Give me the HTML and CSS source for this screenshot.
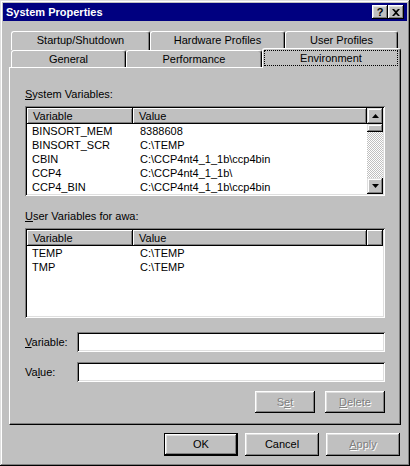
FILE: index.html
```html
<!DOCTYPE html>
<html>

	<head lang="en">
		<meta charset="UTF-8">
		<title>System Properties</title>
		<link rel="stylesheet" href="styles.css">
	</head>

	<body>
		<div class="window">
			<div class="titlebar">
				<span class="title">System Properties</span>
				<div class="tbtns">
					<span class="tbtn help">?</span>
					<span class="tbtn">
						<svg width="8" height="7" viewBox="0 0 8 7"><path d="M0 0h2l2 2 2-2h2L5 3.5 8 7H6L4 5 2 7H0l3-3.5z" fill="#000"/></svg>
					</span>
				</div>
			</div>
			<div class="content">
				<div class="tabs">
					<div class="row">
						<div class="tab" style="width: 139px">Startup/Shutdown</div>
						<div class="tab" style="width: 135px">Hardware Profiles</div>
						<div class="tab" style="width: 113px">User Profiles</div>
					</div>
					<div class="row front">
						<div class="tab" style="width: 115px">General</div>
						<div class="tab" style="width: 136px">Performance</div>
						<div class="tab active" style="width: 139px"><span class="focus">Environment</span></div>
					</div>
				</div>

				<div class="panel">
					<div class="label"><u>S</u>ystem Variables:</div>
					<div class="list">
						<div class="list-main">
							<div class="head">
								<div class="hcell c1">Variable</div>
								<div class="hcell c2">Value</div>
							</div>
							<div class="item"><span class="c1">BINSORT_MEM</span><span class="c2">8388608</span></div>
							<div class="item"><span class="c1">BINSORT_SCR</span><span class="c2">C:\TEMP</span></div>
							<div class="item"><span class="c1">CBIN</span><span class="c2">C:\CCP4nt4_1_1b\ccp4bin</span></div>
							<div class="item"><span class="c1">CCP4</span><span class="c2">C:\CCP4nt4_1_1b\</span></div>
							<div class="item"><span class="c1">CCP4_BIN</span><span class="c2">C:\CCP4nt4_1_1b\ccp4bin</span></div>
						</div>
						<div class="scrollbar">
							<div class="sbtn">
								<svg width="7" height="4" viewBox="0 0 7 4"><path d="M3.5 0 7 4H0z" fill="#000"/></svg>
							</div>
							<div class="thumb"></div>
							<div class="track"></div>
							<div class="sbtn">
								<svg width="7" height="4" viewBox="0 0 7 4"><path d="M0 0h7L3.5 4z" fill="#000"/></svg>
							</div>
						</div>
					</div>

					<div class="label second"><u>U</u>ser Variables for awa:</div>
					<div class="list">
						<div class="list-main">
							<div class="head">
								<div class="hcell c1">Variable</div>
								<div class="hcell c2 wide">Value</div>
								<div class="hcell rest"></div>
							</div>
							<div class="item"><span class="c1">TEMP</span><span class="c2">C:\TEMP</span></div>
							<div class="item"><span class="c1">TMP</span><span class="c2">C:\TEMP</span></div>
						</div>
					</div>

					<div class="field first">
						<label><u>V</u>ariable:</label>
						<div class="input"></div>
					</div>
					<div class="field">
						<label>Va<u>l</u>ue:</label>
						<div class="input"></div>
					</div>
					<div class="actions">
						<span class="btn disabled">S<u>e</u>t</span>
						<span class="btn disabled"><u>D</u>elete</span>
					</div>
				</div>

				<div class="buttons">
					<span class="btn default">OK</span>
					<span class="btn">Cancel</span>
					<span class="btn disabled"><u>A</u>pply</span>
				</div>
			</div>
		</div>
	</body>

</html>
```

FILE: styles.css
```css
* {
	margin: 0;
	padding: 0;
	box-sizing: border-box;
}

body {
	background-color: #c0c0c0;
	font-family: "Liberation Sans", Arial, sans-serif;
	font-size: 11px;
	color: #000;
}

u {
	text-decoration: underline;
	text-underline-offset: 1px;
}

.window {
	width: 410px;
	height: 466px;
	padding: 3px;
	background-color: #c0c0c0;
	box-shadow: inset -1px -1px #000, inset 1px 1px #dfdfdf, inset -2px -2px #808080, inset 2px 2px #fff;
}

.titlebar {
	height: 18px;
	background-color: #000080;
	display: flex;
	align-items: center;
	justify-content: space-between;
	padding: 0 3px 0 3px;
}

.title {
	color: #fff;
	font-weight: bold;
	font-size: 11px;
}

.tbtns {
	display: flex;
}

.tbtn {
	width: 16px;
	height: 14px;
	display: flex;
	align-items: center;
	justify-content: center;
	background-color: #c0c0c0;
	box-shadow: inset -1px -1px #000, inset 1px 1px #fff, inset -2px -2px #808080, inset 2px 2px #dfdfdf;
}

.help {
	font-weight: bold;
	font-size: 11px;
	line-height: 14px;
}

.content {
	padding: 0 6px;
}

.tabs {
	margin-top: 10px;
	padding-left: 2px;
}

.row {
	display: flex;
	height: 19px;
}

.row.front {
	height: 17px;
	align-items: flex-start;
}

.tab {
	height: 100%;
	border: 1px solid #fff;
	border-right-color: #000;
	border-bottom: none;
	border-radius: 3px 3px 0 0;
	box-shadow: inset -1px 0 #808080;
	background-color: #c0c0c0;
	text-align: center;
	line-height: 16px;
}

.tab.active {
	height: 20px;
	margin-top: -2px;
	margin-bottom: -1px;
	position: relative;
	z-index: 1;
	padding: 1px 2px 0 1px;
}

.focus {
	display: block;
	height: 16px;
	line-height: 14px;
	border: 1px dotted #000;
}

.panel {
	height: 358px;
	border: 1px solid #fff;
	border-right-color: #000;
	border-bottom-color: #000;
	box-shadow: inset -1px -1px #808080;
	padding: 20px 15px 0 15px;
}

.label {
	line-height: 13px;
	margin-bottom: 5px;
}

.label.second {
	margin-top: 14px;
}

.list {
	height: 90px;
	background-color: #fff;
	padding: 2px;
	display: flex;
	box-shadow: inset 1px 1px #808080, inset -1px -1px #fff, inset 2px 2px #000, inset -2px -2px #dfdfdf;
	overflow: hidden;
}

.list-main {
	flex: 1;
	overflow: hidden;
}

.head {
	display: flex;
	height: 16px;
}

.hcell {
	background-color: #c0c0c0;
	line-height: 16px;
	padding-left: 6px;
	box-shadow: inset -1px -1px #000, inset 1px 1px #fff, inset -2px -2px #808080;
}

.hcell.c1 {
	width: 106px;
}

.hcell.c2 {
	flex: 1;
}

.hcell.c2.wide {
	flex: none;
	width: 234px;
}

.hcell.rest {
	flex: 1;
}

.item {
	display: flex;
	height: 14px;
	line-height: 14px;
	white-space: nowrap;
}

.item .c1 {
	width: 106px;
	padding-left: 5px;
}

.item .c2 {
	padding-left: 7px;
}

.scrollbar {
	width: 16px;
	display: flex;
	flex-direction: column;
}

.sbtn,
.thumb {
	height: 16px;
	display: flex;
	align-items: center;
	justify-content: center;
	background-color: #c0c0c0;
	box-shadow: inset -1px -1px #000, inset 1px 1px #dfdfdf, inset -2px -2px #808080, inset 2px 2px #fff;
}

.thumb {
	height: 8px;
}

.track {
	flex: 1;
	background: repeating-conic-gradient(#c0c0c0 0 25%, #fff 0 50%) 0 0 / 2px 2px;
}

.field {
	display: flex;
	align-items: center;
	margin-top: 10px;
}

.field.first {
	margin-top: 14px;
}

.field label {
	width: 52px;
}

.input {
	flex: 1;
	height: 20px;
	background-color: #fff;
	box-shadow: inset 1px 1px #808080, inset -1px -1px #fff, inset 2px 2px #000, inset -2px -2px #dfdfdf;
}

.actions {
	display: flex;
	justify-content: flex-end;
	gap: 10px;
	margin-top: 9px;
}

.btn {
	display: inline-block;
	width: 60px;
	height: 22px;
	line-height: 22px;
	text-align: center;
	background-color: #c0c0c0;
	box-shadow: inset -1px -1px #000, inset 1px 1px #fff, inset -2px -2px #808080, inset 2px 2px #dfdfdf;
}

.btn.disabled {
	color: #808080;
	text-shadow: 1px 1px #fff;
}

.buttons {
	display: flex;
	justify-content: flex-end;
	gap: 7px;
	margin-top: 8px;
	padding-right: 1px;
}

.buttons .btn {
	width: 74px;
	height: 23px;
	line-height: 23px;
}

.btn.default {
	border: 1px solid #000;
	line-height: 21px;
}
```
